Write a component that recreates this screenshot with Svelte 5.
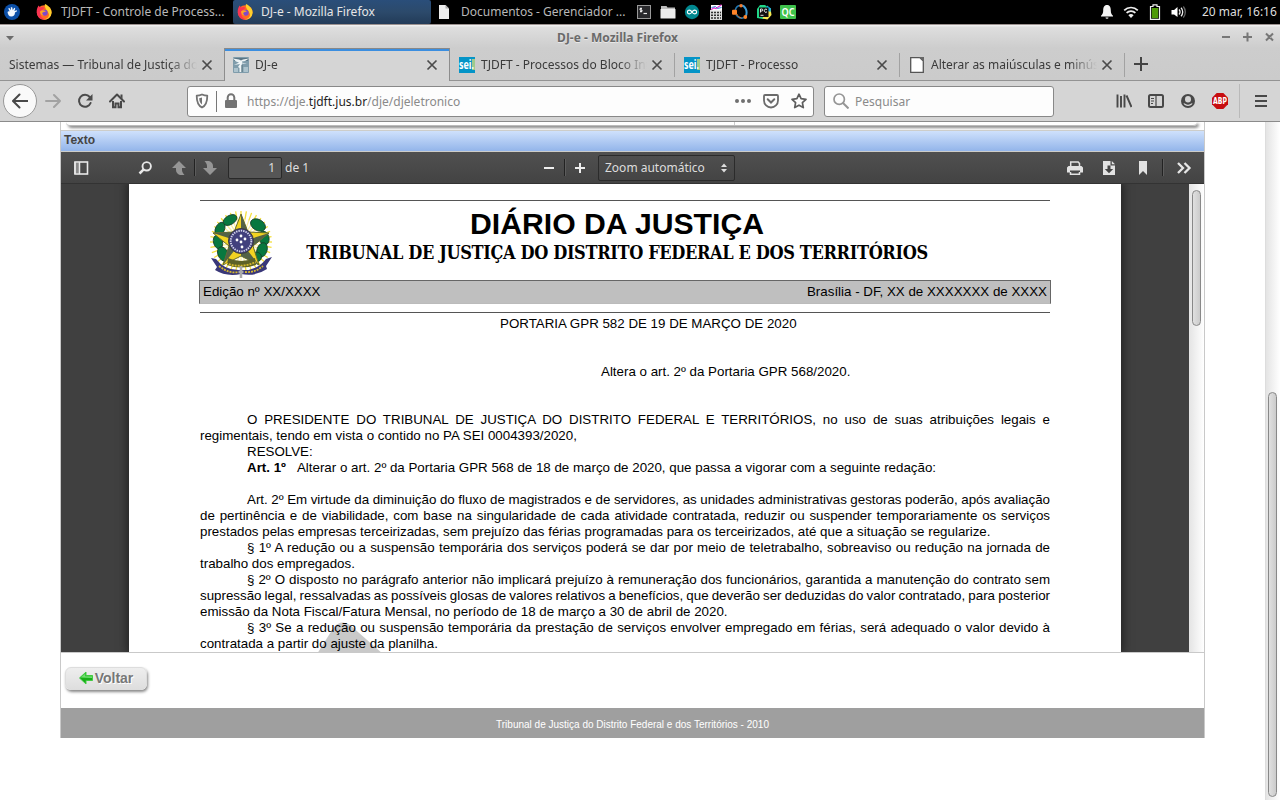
<script>
  const launchers = ['term', 'folder', 'arduino', 'calc', 'octave', 'pycharm', 'qc'];
  const tabs = [
    { title: 'Sistemas — Tribunal de Justiça do Distrito', icon: null },
    { title: 'DJ-e', icon: 'dje', active: true },
    { title: 'TJDFT - Processos do Bloco Interno', icon: 'sei' },
    { title: 'TJDFT - Processo', icon: 'sei' },
    { title: 'Alterar as maiúsculas e minúsculas', icon: 'page' }
  ];
  const lines = [
    { t: 'O PRESIDENTE DO TRIBUNAL DE JUSTIÇA DO DISTRITO FEDERAL E TERRITÓRIOS, no uso de suas atribuições legais e', i: 1, j: 1 },
    { t: 'regimentais, tendo em vista o contido no PA SEI 0004393/2020,' },
    { t: 'RESOLVE:', i: 1 },
    { b: 'Art. 1º', t: 'Alterar o art. 2º da Portaria GPR 568 de 18 de março de 2020, que passa a vigorar com a seguinte redação:', i: 1 },
    { t: '' },
    { t: 'Art. 2º Em virtude da diminuição do fluxo de magistrados e de servidores, as unidades administrativas gestoras poderão, após avaliação', i: 1, j: 1 },
    { t: 'de pertinência e de viabilidade, com base na singularidade de cada atividade contratada, reduzir ou suspender temporariamente os serviços', j: 1 },
    { t: 'prestados pelas empresas terceirizadas, sem prejuízo das férias programadas para os terceirizados, até que a situação se regularize.' },
    { t: '§ 1º A redução ou a suspensão temporária dos serviços poderá se dar por meio de teletrabalho, sobreaviso ou redução na jornada de', i: 1, j: 1 },
    { t: 'trabalho dos empregados.' },
    { t: '§ 2º O disposto no parágrafo anterior não implicará prejuízo à remuneração dos funcionários, garantida a manutenção do contrato sem', i: 1, j: 1 },
    { t: 'supressão legal, ressalvadas as possíveis glosas de valores relativos a benefícios, que deverão ser deduzidas do valor contratado, para posterior', j: 1 },
    { t: 'emissão da Nota Fiscal/Fatura Mensal, no período de 18 de março a 30 de abril de 2020.' },
    { t: '§ 3º Se a redução ou suspensão temporária da prestação de serviços envolver empregado em férias, será adequado o valor devido à', i: 1, j: 1 },
    { t: 'contratada a partir do ajuste da planilha.' }
  ];
  const ring = Array.from({ length: 36 }, (_, k) => k * 10);
</script>

{#snippet icon(name)}
  <svg class="ic" width="16" height="16" viewBox="0 0 16 16" fill="none">
    {#if name === 'xubuntu'}
      <circle cx="8" cy="8" r="8" fill="#0b4fa8" />
      <path d="M3.500 8c.5-1 1.500-1 2.300-.6L4.200 4.500l1.200-.6L7 6.300l-.2-3h1.400l.6 3 1.400-2.600 1 .7L10.400 7l2.400-.8.3 1-2.100 1.300c0 2.500-1.400 4-3.700 4C5 12.500 3.800 10.500 3.500 8z" fill="#f4f8ff" />
    {:else if name === 'firefox'}
      <circle cx="8.200" cy="8.500" r="7.300" fill="#ff6a22" />
      <path d="M9 0c3 1.500 6.900 4.500 6.600 9A7.200 7.200 0 0 1 7 15.500c5-.5 7-3.500 5.500-6.500S8 4 9 0z" fill="#ffd02b" />
      <path d="M.8 6C1 4 2 3 2.500 1.500l1.700 2C6 2.500 7.500 3 8.500 4L6 6l-1.500 4c-.5 2 1.500 4.500 5 5.500-5 1-9.500-3-8.700-9.500z" fill="#fb3452" />
      <circle cx="8.700" cy="8.800" r="3" fill="#8049c9" /><path d="M4 7.500c2-2 4-1 6 0-2 0-2.500.8-3.300 1s-.7 2 1.300 3c-3 0-4-2-4-4z" fill="#ffa422" />
    {:else if name === 'doc'}
      <path d="M3 1h6.500L13 4.500V15H3z" fill="#eee" /><path d="M9.500 1v3.500H13z" fill="#aaa" />
    {:else if name === 'term'}
      <rect x="1.500" y="1.500" width="13" height="13" fill="#29292c" stroke="#999" /><path d="M6 4.500H4v1.500h2v1.500H4M5 3.500v5" stroke="#eee" /><path d="M7.500 9.500H11" stroke="#eee" stroke-width="1.200" />
    {:else if name === 'folder'}
      <path d="M1 2h5.500l1 1.500H15V6H1z" fill="#bbb" /><rect x=".5" y="5" width="15" height="9.500" rx=".6" fill="#ececec" />
    {:else if name === 'arduino'}
      <circle cx="8" cy="8" r="7.200" fill="#00878f" /><path d="M8 8c-1.500-2.500-4.600-2.300-4.600 0S6.500 10.500 8 8s4.600-2.300 4.600 0S9.500 10.500 8 8z" stroke="#fff" stroke-width="1.200" />
    {:else if name === 'calc'}
      <rect x="2" y="6" width="12" height="10" fill="#ddd" /><rect x="3" y="1" width="11" height="5.500" fill="#fff" /><path d="M3 5.800l3-2 2 .7 5.500-3.800" stroke="#e33ad0" stroke-width="1.300" /><path d="M3.500 3.500l4-1 2 2 4-1" stroke="#38d" />
      <path d="M3 8.500h10M3 11.200h10M3 14h10" stroke="#333" stroke-width="1.500" stroke-dasharray="2 1" />
    {:else if name === 'octave'}
      <path d="M3.300 6C4 3 6 1.500 8.500 1.500M4 10.500c1.500 3 5 4.500 8 3" stroke="#1f78b4" stroke-width="1.600" /><path d="M9 1.300c4.500.5 7 6 4.700 11" stroke="#3c9bd6" stroke-width="2" /><path d="M4.800 10c1 2 2.500 3.500 4.700 4" stroke="#e0752d" />
      <rect x="0" y="5.800" width="5" height="5" rx="1" fill="#ff8428" /><circle cx="9" cy="1.800" r="1.700" fill="#f47a2d" /><circle cx="13.300" cy="13" r="1.900" fill="#ff8428" />
    {:else if name === 'pycharm'}
      <path d="M1 5l3-4 5 0 5 4-1 8-6 2-6-1z" fill="#21d789" /><path d="M10 5l4.500-1 1 7-4 4.500-5-1z" fill="#f7e84f" /><path d="M11 1.500l4 3-.5 3.500L10 6z" fill="#12b8e6" /><rect x="3" y="3.500" width="9.500" height="9.500" fill="#111" />
      <path d="M4.500 8.500v-3.500h1.300a1 1 0 0 1 0 2H4.500M11 5.500c-1.800-1-2.700 0-2.700 1.200s1 2.200 2.700 1.200M4.500 11.300h3" stroke="#fff" stroke-width=".9" />
    {:else if name === 'qc'}
      <rect x="0" y="1" width="16" height="14" rx="1" fill="#3fc24c" /><text x="8" y="12.200" fill="#fff" font-size="11" font-weight="600" text-anchor="middle" textLength="13" lengthAdjust="spacingAndGlyphs" font-family="Noto Sans">QC</text>
    {:else if name === 'bell'}
      <path d="M8 1c-3 0-3.800 2.500-3.800 5.500 0 2.500-.7 4-2.200 5.200V12.500h12v-.8c-1.500-1.200-2.200-2.700-2.200-5.200C11.800 3.500 11 1 8 1zM6.500 13.500h3a1.500 1.200 0 0 1-3 0z" fill="#f4f4f4" />
    {:else if name === 'wifi'}
      <path d="M1.200 6.300a9.600 9.600 0 0 1 13.600 0M3.600 8.900a6.200 6.200 0 0 1 8.800 0" stroke="#eee" stroke-width="1.700" /><path d="M5.400 11.300a3.700 3.700 0 0 1 5.200 0L8 14z" fill="#eee" />
    {:else if name === 'battery'}
      <path d="M6 .8h4V2.500h2.500v12.900h-9V2.500H6z" stroke="#eee" stroke-width="1.200" /><rect x="4.800" y="4" width="6.400" height="10.200" fill="#4e9a06" />
    {:else if name === 'volume'}
      <path d="M.5 6h2.600L6.500 3v10L3.100 10.500H.5z" fill="#fff" /><path d="M8 5.500a3.500 3.500 0 0 1 0 5M10 3.800a6 6 0 0 1 0 8.400" stroke="#eee" stroke-width="1.300" /><path d="M12.300 2.500a8.500 8.500 0 0 1 0 11" stroke="#666" stroke-width="1.300" />
    {:else if name === 'dje'}
      <rect x="0" y="0" width="16" height="16" rx="1" fill="#7f9cab" /><path d="M1 1h14v3H1z" fill="#5a7686" /><path d="M0 1.500l6 1 2 1 2-1 6-1-4 2.500-3 .5v1l5 1.500-5-.5L8.500 9v6H6.500v-4L5 10l2-3-6 1 5-2.500-3-1z" fill="#eef4f6" /><path d="M1 11h4v4H1zM10.500 10H15v5h-4.500z" fill="#adc3cd" /><path d="M9 8v7" stroke="#4d6775" stroke-width=".8" />
    {:else if name === 'sei'}
      <rect width="16" height="16" fill="#0494c7" /><rect x="13" y="2" width="3" height="11" fill="#9ecb8d" /><text x="0" y="12" fill="#fff" font-size="12" font-weight="700" textLength="15" lengthAdjust="spacingAndGlyphs" font-family="Noto Sans">sei.</text>
    {:else if name === 'page'}
      <path d="M1.700.7H11L14.300 4v11.300H1.700z" fill="#fff" stroke="#555" stroke-width="1.300" /><path d="M10 0h5v5z" fill="#666" />
    {:else if name === 'x'}
      <path d="M3.500 3.500l9 9M12.500 3.500l-9 9" stroke="#4b4b4b" stroke-width="1.700" />
    {:else if name === 'plus'}
      <path d="M8 1v14M1 8h14" stroke="#444" stroke-width="2" />
    {:else if name === 'back'}
      <path d="M15.500 8H1.500M7.500 1.500L1 8l6.500 6.500" stroke="#484848" stroke-width="2" stroke-linejoin="round" stroke-linecap="round" />
    {:else if name === 'forward'}
      <path d="M1 8h14M9 2l6 6-6 6" stroke="#a2a2a2" stroke-width="2" stroke-linejoin="round" stroke-linecap="round" />
    {:else if name === 'reload'}
      <path d="M12.700 4A6 6 0 1 0 13.600 10" stroke="#4b4b4b" stroke-width="2" stroke-linecap="round" /><path d="M15.500 1v6.500H9z" fill="#4b4b4b" />
    {:else if name === 'home'}
      <path d="M1 8.500L8 1.500l7 7" stroke="#484848" stroke-width="2" stroke-linejoin="round" stroke-linecap="round" /><path d="M4 8v6.200h2.500v-3.700h3v3.700H12V8" stroke="#484848" stroke-width="2" /><path d="M11.500 1.500h2V6l-2-2z" fill="#484848" />
    {:else if name === 'shield'}
      <path d="M8 1.500c2 .9 4 1.200 5.300 1.200 0 5-.8 9.600-5.300 11.800C3.500 12.300 2.700 7.700 2.700 2.700 4 2.700 6 2.400 8 1.500z" stroke="#737373" stroke-width="1.800" stroke-linejoin="round" /><path d="M8 4.500v7C6 10 5.300 8 5.200 5.200z" fill="#737373" />
    {:else if name === 'lock'}
      <path d="M4.700 7V4.500a3.300 3.300 0 0 1 6.600 0V7" stroke="#737373" stroke-width="2" /><rect x="2" y="7" width="12" height="8" rx="1" fill="#737373" />
    {:else if name === 'dots'}
      <circle cx="2" cy="8" r="2" fill="#707070" /><circle cx="8" cy="8" r="2" fill="#707070" /><circle cx="14" cy="8" r="2" fill="#707070" />
    {:else if name === 'pocket'}
      <path d="M2 2h12a1 1 0 0 1 1 1v4.500a7 7 0 0 1-14 0V3a1 1 0 0 1 1-1z" stroke="#6b6b6b" stroke-width="1.800" /><path d="M4.700 6.300L8 9.500l3.300-3.200" stroke="#6b6b6b" stroke-width="2" stroke-linecap="round" />
    {:else if name === 'star'}
      <path d="M8 1.200l2.100 4.500 4.900.6-3.600 3.400.9 4.900L8 12.200l-4.300 2.400.9-4.900L1 6.300l4.900-.6z" stroke="#5e5e5e" stroke-width="1.700" stroke-linejoin="round" />
    {:else if name === 'glass'}
      <circle cx="6.200" cy="6.200" r="5.200" stroke="#959595" stroke-width="1.700" /><path d="M10 10l5.500 5.500" stroke="#959595" stroke-width="2" />
    {:else if name === 'library'}
      <path d="M1.500 1.500v13M5 3v11.500M8.500 1.500v13M10.500 2.500l5 11.500" stroke="#484848" stroke-width="1.900" />
    {:else if name === 'sidebar'}
      <rect x="1" y="2" width="14" height="12" rx="1.500" stroke="#484848" stroke-width="2" /><path d="M8 2v12M3 5.500h3M3 8h3M3 10.500h2" stroke="#484848" stroke-width="1.200" />
    {:else if name === 'account'}
      <circle cx="8" cy="8" r="7" fill="#484848" /><ellipse cx="8" cy="6.300" rx="3" ry="3.300" fill="#d5d5d5" /><path d="M3.500 10.300c1 0 1.500.2 2.200.7 1.400.9 3.200.9 4.600 0 .7-.5 1.200-.7 2.200-.7-1 3.600-8 3.600-9 0z" fill="#d5d5d5" />
    {:else if name === 'abp'}
      <path d="M4.700 0h6.600L16 4.700v6.600L11.300 16H4.700L0 11.300V4.700z" fill="#c70d10" /><text x="8" y="11" fill="#fff" font-size="8" font-weight="900" text-anchor="middle" textLength="14" lengthAdjust="spacingAndGlyphs" font-family="DejaVu Sans">ABP</text>
    {:else if name === 'menu'}
      <path d="M2 3h12M2 8h12M2 13h12" stroke="#484848" stroke-width="2" />
    {:else if name === 'toggle'}
      <rect x="2" y="2" width="12.500" height="12" stroke="#e8e8e8" stroke-width="1.600" /><path d="M3 3h3v10H3z" fill="#8a8a8a" /><path d="M6.500 2v12M2 2v12" stroke="#e8e8e8" stroke-width="1.500" />
    {:else if name === 'find'}
      <circle cx="9.700" cy="6.300" r="4.200" stroke="#e8e8e8" stroke-width="1.900" /><path d="M6.700 9.300L2.500 13.500" stroke="#e8e8e8" stroke-width="2.500" />
    {:else if name === 'up'}
      <path d="M8 1l7 7h-4v2c0 2 1 3 2.500 5H9c-2.500-1-4-2.500-4-5V8H1z" fill="#959595" />
    {:else if name === 'down'}
      <path d="M2.500 1H7c2.500 1 4 2.500 4 5v2h4l-7 7-7-7h4V6c0-2-1-3-2.500-5z" fill="#959595" />
    {:else if name === 'minus'}
      <path d="M3 8h10" stroke="#eee" stroke-width="2" />
    {:else if name === 'zplus'}
      <path d="M3 8h10M8 3v10" stroke="#eee" stroke-width="2" />
    {:else if name === 'print'}
      <path d="M3.700 7V2h7.500l1.300 1.500V7" stroke="#e2e2e2" stroke-width="1.500" /><path d="M0 7.500L1.500 6h13L16 7.500V12.500h-3V10.500H3v2H0z" fill="#e2e2e2" /><path d="M3.500 12v2.200h9V12" stroke="#e2e2e2" stroke-width="1.500" />
    {:else if name === 'download'}
      <path d="M2 1h7.500v4.500H14V15H2zM10.800 1L14 4.300h-3.200z" fill="#e2e2e2" /><path d="M6.500 5.500h3V9h2.700L8 13.200 3.800 9h2.700z" fill="#444" />
    {:else if name === 'bookmark'}
      <path d="M4 1h8v14l-4-4-4 4z" fill="#e2e2e2" />
    {:else if name === 'more'}
      <path d="M2 3l5 5-5 5M8.500 3l5 5-5 5" stroke="#e6e6e6" stroke-width="2.300" />
    {:else if name === 'green'}
      <path d="M1.500 8L8 2v3.500h6.500v5H8V14z" fill="#19ad19" stroke="#42cb42" /><path d="M2.800 7.500L7.300 3.500v2.700H14V8z" fill="#6fe06f" />
    {/if}
  </svg>
{/snippet}

<div class="screen">
  <header class="panel">
    <span class="s" style:width="24px">{@render icon('xubuntu')}</span>
    <div class="task t1">{@render icon('firefox')}<span>TJDFT - Controle de Process...</span></div>
    <div class="task on">{@render icon('firefox')}<span>DJ-e - Mozilla Firefox</span></div>
    <div class="task t3">{@render icon('doc')}<span>Documentos - Gerenciador ...</span></div>
    {#each launchers as l}<span class="s" style:width="24px">{@render icon(l)}</span>{/each}
    <div class="tray">
      {#each ['bell', 'wifi', 'battery', 'volume'] as n}<span class="s" style:width="24px">{@render icon(n)}</span>{/each}
      <span class="clock">20 mar, 16:16</span>
    </div>
  </header>

  <div class="title">
    <svg width="10" height="6" viewBox="0 0 10 6"><path d="M1 1h8L5 5.500z" fill="#6c6c6c" /></svg>
    <b>DJ-e - Mozilla Firefox</b>
    <svg width="56" height="12" viewBox="0 0 56 12" stroke="#777" stroke-width="2"><path d="M2 5h8M23 5h9M27.500.5v9M46 1.500l7 7M53 1.500l-7 7" /></svg>
  </div>

  <div class="tabs">
    {#each tabs as tab}
      <div class="tab" class:active={tab.active}>
        {#if tab.icon}{@render icon(tab.icon)}{/if}
        <span class="label">{tab.title}</span>
        {@render icon('x')}
      </div>
    {/each}
    <span class="new">{@render icon('plus')}</span>
  </div>

  <nav class="nav">
    <span class="back">{@render icon('back')}</span>
    <span class="s" style:width="32px">{@render icon('forward')}</span>
    <span class="s" style:width="32px">{@render icon('reload')}</span>
    <span class="s" style:width="32px">{@render icon('home')}</span>
    <div class="field url">
      {@render icon('shield')}<i></i>{@render icon('lock')}
      <span class="addr">https://dje.<em>tjdft.jus.br</em>/dje/djeletronico</span>
      {@render icon('dots')}{@render icon('pocket')}{@render icon('star')}
    </div>
    <div class="field search">{@render icon('glass')}<span>Pesquisar</span></div>
    <div class="tools">
      {#each ['library', 'sidebar', 'account', 'abp'] as n}<span class="s" style:width="32px">{@render icon(n)}</span>{/each}
      <i></i><span class="s" style:width="38px">{@render icon('menu')}</span>
    </div>
  </nav>

  <main class="view">
    <section class="site">
      <div class="prev"><div class="card"><span></span></div></div>
      <div class="caption">Texto</div>
      <div class="pdf">
        <div class="bar">
          <span class="s g1">{@render icon('toggle')}</span>
          <span class="s g2">{@render icon('find')}</span>
          <span class="s g3">{@render icon('up')}</span><i></i>
          <span class="s g4">{@render icon('down')}</span>
          <span class="num">1</span><span class="of">de 1</span>
          <span class="s g5">{@render icon('minus')}</span><i></i>
          <span class="s g6">{@render icon('zplus')}</span>
          <span class="zoom">Zoom automático <svg width="8" height="10" viewBox="0 0 8 10"><path d="M1 4l3-3.500L7 4zM1 6l3 3.500L7 6z" fill="#ddd" /></svg></span>
          <div class="right">
            {#each ['print', 'download', 'bookmark'] as n}<span class="s" style:width="34px">{@render icon(n)}</span>{/each}
            <i></i><span class="s" style:width="41px">{@render icon('more')}</span>
          </div>
        </div>
        <div class="stage">
          <div class="page">
            <svg class="mark" width="66" height="32" viewBox="0 0 66 32"><path d="M0 32L17 5Q24-3 33 3L66 32z" fill="#c9c9c9" /></svg>
            <div class="rule"></div>
            <div class="head">
              <svg class="crest" width="66" height="70" viewBox="0 0 66 70">
                <g stroke="#f5df3c" stroke-width="1.300">{#each ring as a}<path d="M32 32L32 1" transform="rotate({a} 32 32)" />{/each}</g>
                <circle cx="32" cy="33" r="24" fill="#fff" opacity=".5" />
                <g fill="#08783f" stroke="#173b27" stroke-width=".8">
                  <ellipse cx="21" cy="10" rx="7.500" ry="4.500" transform="rotate(-30 21 10)" /><ellipse cx="11" cy="19" rx="4.500" ry="7" transform="rotate(25 11 19)" />
                  <ellipse cx="9" cy="32" rx="4.500" ry="7" transform="rotate(-15 9 32)" /><ellipse cx="14" cy="44" rx="5" ry="7.500" transform="rotate(-25 14 44)" />
                  <ellipse cx="49" cy="15" rx="8" ry="5.500" transform="rotate(30 49 15)" /><ellipse cx="55" cy="28" rx="5" ry="7" transform="rotate(-15 55 28)" />
                  <ellipse cx="53" cy="40" rx="5" ry="7.500" transform="rotate(20 53 40)" /><ellipse cx="47" cy="47" rx="5.500" ry="5" />
                </g>
                <path d="M32 4l7 18 21 1-16 13 6 19-18-9-18 9 6-19L4 23l21-1z" fill="#f2d321" stroke="#686c28" />
                <path d="M32 4v28l7-10zM60 23L32 32l12 4zM50 55L32 32v14zM14 55l18-23-12 4zM4 23l28 9-7-10z" fill="#536246" />
                <circle cx="32" cy="31" r="12.500" fill="#41407d" stroke="#3b3b3b" /><circle cx="32" cy="31" r="10.300" stroke="#d7d7ec" stroke-width="1.800" stroke-dasharray="1.400 1" fill="none" />
                <g fill="#fff"><circle cx="32" cy="26" r="1.400" /><circle cx="28" cy="30" r="1.400" /><circle cx="36" cy="29" r="1.400" /><circle cx="32" cy="32" r="1.400" /><circle cx="33" cy="37" r="1.400" /></g>
                <path d="M19 48q13 6 27 0l1 7q-15 5-29 0z" fill="#5c6128" />
                <path d="M2 48l5 1q9 12 25 11 16 1 25-11l6-2-6 9 1 3Q46 67 32 64 17 67 6 60l2-3z" fill="#393779" />
                <path d="M10 56q10 8 19 6M36 62q10 1 18-6M17 53q14 6 30-1" stroke="#d5b92d" stroke-width="1.800" stroke-dasharray="2 1" fill="none" />
                <path d="M32 56v12M29.500 62h5" stroke="#aaa" stroke-width="2.500" />
              </svg>
              <h1>DIÁRIO DA JUSTIÇA</h1>
              <h2>TRIBUNAL DE JUSTIÇA DO DISTRITO FEDERAL E DOS TERRITÓRIOS</h2>
            </div>
            <div class="edition"><span>Edição nº XX/XXXX</span><span>Brasília - DF, XX de XXXXXXX de XXXX</span></div>
            <div class="rule"></div>
            <article>
              <p class="ord">PORTARIA GPR 582 DE 19 DE MARÇO DE 2020</p>
              <p class="sum">Altera o art. 2º da Portaria GPR 568/2020.</p>
              {#each lines as l}
                <p class:indent={l.i} class:just={l.j}>{#if l.b}<b>{l.b}</b>{/if}{l.t}</p>
              {/each}
            </article>
          </div>
          <div class="inner-scroll"><div></div></div>
        </div>
      </div>
      <div class="actions"><button>{@render icon('green')}Voltar</button></div>
      <footer>Tribunal de Justiça do Distrito Federal e dos Territórios - 2010</footer>
    </section>
    <div class="scroll"><div></div></div>
  </main>
</div>

<style>
  :global(body) { margin: 0; overflow: hidden; }
  * { box-sizing: border-box; }
  .screen { width: 1280px; height: 800px; overflow: hidden; background: #fff; font: 12px/16px "Noto Sans", sans-serif; display: flex; flex-direction: column; white-space: nowrap; }
  .ic, svg { display: block; flex: none; }
  .s { display: flex; justify-content: center; align-items: center; flex: none; }
  .panel { height: 24px; background: #000; color: #b8b8b8; display: flex; align-items: center; flex: none; }
  .task { display: flex; align-items: center; height: 24px; flex: none; }
  .t1 { width: 209px; padding-left: 12px; gap: 9px; }
  .on { width: 198px; padding-left: 4px; gap: 8px; color: #e6e6e6; background: linear-gradient(#2a4e7a, #2c4a6b 50%, #223b58); border-radius: 2px; }
  .t3 { width: 201px; padding-left: 5px; gap: 9px; }
  .tray { margin-left: auto; display: flex; align-items: center; color: #ddd; }
  .clock { width: 89px; padding-left: 11px; }
  .title { height: 24px; flex: none; display: flex; align-items: center; justify-content: space-between; padding: 2px 4px 0 5px; border-top: 1px solid #9b918f; background: linear-gradient(#f4f4f4, #dedede 10%, #cdcdcd); color: #6a6a6a; }
  .title b { margin-left: 0; font-weight: 700; text-shadow: 0 1px #e8e8e8; }
  .tabs { height: 33px; flex: none; display: flex; background: linear-gradient(#cdcdcd, #cbcbcb); border-bottom: 1px solid #939393; color: #3b3b3b; }
  .tab { width: 225px; height: 33px; display: flex; align-items: center; padding: 0 10px 0 9px; gap: 6px; position: relative; }
  .tab + .tab::before { content: ""; position: absolute; left: -1px; top: 5px; width: 1px; height: 24px; background: #a2a2a2; }
  .tab:first-child { width: 224px; padding-right: 9px; }
  .tab.active { width: 226px; background: #d5d5d5; border: 1px solid #8d8d8d; border-top-color: #888; border-bottom: 0; box-shadow: inset 0 2px #3b8ee0; padding: 0 9px 0 8px; }
  .tab.active::before, .tab.active + .tab::before { display: none; }
  .label { flex: 1; overflow: hidden; mask-image: linear-gradient(to right, #000 calc(100% - 28px), transparent); }
  .tab .ic:last-child { margin-left: -4px; }
  .new { border-left: 1px solid #a2a2a2; height: 24px; margin: 5px 0 0 -1px; padding: 3px 0 0 8px; }
  .nav { height: 41px; flex: none; display: flex; align-items: center; background: #d5d5d5; border-bottom: 1px solid #8b8b8b; }
  .back { width: 34px; height: 34px; margin-left: 3px; border: 1px solid #989898; border-radius: 50%; background: #f9f9f9; display: grid; place-items: center; }
  .field { height: 31px; border: 1px solid #888; border-radius: 3px; background: #fdfdfd; display: flex; align-items: center; color: #8a8a8a; }
  .field span { padding-top: 1px; }
  .url { width: 627px; margin-left: 54px; padding: 0 6px; }
  .url i { width: 1px; height: 21px; background: #777; margin: 0 6px 0 6px; }
  .addr { flex: 1; margin-left: 8px; }
  .addr em { font-style: normal; color: #1d1d1d; }
  .url .ic + .ic { margin-left: 12px; }
  .search { width: 230px; margin-left: 10px; padding-left: 8px; gap: 6px; }
  .tools { margin-left: auto; display: flex; align-items: center; }
  .tools i { width: 1px; height: 34px; background: #b9b9b9; margin: 0 2px 0 3px; }
  .view { flex: 1; display: flex; min-height: 0; }
  .site { margin-left: 60px; width: 1145px; height: 616px; border: 1px solid #c9c9c9; border-top: 0; border-bottom: 0; }
  .prev { height: 8px; padding: 0 7px 4px 5px; }
  .card { height: 4px; border-bottom: 1px solid #bbb; border-radius: 0 0 6px 6px; box-shadow: 2px 2px 3px #888; }
  .card span { display: block; margin-left: 668px; width: 1px; height: 3px; background: #ccc; }
  .caption { height: 22px; border: solid #cdcdc9; border-width: 1px 0; background: linear-gradient(#cfe1fc, #93b5ea); color: #444; font: bold 12px/18px "Liberation Sans", sans-serif; padding-left: 3px; }
  .pdf { height: 501px; border-bottom: 1px solid #c9c9c9; }
  .bar { height: 32px; display: flex; align-items: center; background: linear-gradient(#505050, #434343); color: #ddd; border-bottom: 1px solid #333; }
  .bar i { width: 1px; height: 17px; background: #222; box-shadow: 1px 0 #5c5c5c; }
  .g1 { margin-left: 12px; } .g2 { margin-left: 48px; } .g3 { margin-left: 18px; }
  .bar .g3 + i { margin-left: 7px; } .g4 { margin-left: 7px; }
  .num { margin-left: 10px; width: 54px; height: 22px; border: 1px solid #292929; border-radius: 2px; background: #565656; text-align: right; padding: 2px 6px; }
  .of { margin-left: 3px; width: 24px; }
  .g5 { margin-left: 232px; } .g5 + i { margin-left: 7px; } .g6 { margin-left: 7px; }
  .zoom { width: 137px; height: 26px; margin-left: 10px; border: 1px solid #2b2b2b; border-radius: 2px; display: flex; align-items: center; justify-content: space-between; padding: 1px 6px 0; }
  .right { margin-left: auto; display: flex; align-items: center; }
  .right i { margin-left: 2px; }
  .stage { height: 468px; display: flex; justify-content: space-between; overflow: hidden; background: #404040; padding-left: 68px; }
  .page { width: 992px; background: #fff; padding: 16px 71px 0; box-shadow: 0 0 9px 2px #222; color: #000; position: relative; font: 13.330px/16px "Liberation Sans", sans-serif; }
  .mark { position: absolute; left: 188px; top: 438px; }
  .rule { height: 1px; background: #555; }
  .head { height: 79px; position: relative; padding: 4px 16px 0 0; text-align: center; }
  .crest { position: absolute; left: 9px; top: 9px; }
  h1 { margin: 0; font: bold 30.200px/38px "Liberation Sans", sans-serif; }
  h2 { margin: 0 -20px; font: bold 18px/20px "DejaVu Serif Condensed", "DejaVu Serif", serif; font-stretch: condensed; letter-spacing: -.36px; }
  .edition { height: 24px; margin: 0 -1px 8px; border: 1px solid #666; border-bottom-color: #bbb; background: #bfbfbf; display: flex; justify-content: space-between; padding: 3px 3px; }
  article { position: relative; padding-top: 3px; }
  p { margin: 0; height: 16px; }
  .ord { padding-left: 300px; margin-bottom: 32px; }
  .sum { padding-left: 401px; margin-bottom: 32px; }
  .indent { padding-left: 47px; }
  .just { text-align-last: justify; white-space: normal; word-spacing: -.7px; }
  p b { margin-right: 11px; }
  .inner-scroll { width: 15px; background: linear-gradient(90deg, #e4e4e4, #fff); padding: 6px 3px; position: relative; }
  .inner-scroll div, .scroll div { width: 9px; border: 1px solid #888; border-radius: 5px; background: linear-gradient(90deg, #e0e0e0, #cbcbcb); }
  .inner-scroll div { height: 136px; }
  .actions { height: 55px; padding: 14px 4px; }
  button { width: 82px; height: 23px; display: flex; align-items: center; justify-content: center; border: 1px solid #ddd; border-radius: 6px; background: linear-gradient(#eee, #dedede); box-shadow: 1px 2px 3px #888; color: #777; font: bold 14px/20px "Liberation Sans", sans-serif; padding: 0 1px 2px 0; gap: 1px; text-shadow: 1px 1px #fff; }
  footer { height: 30px; background: #9f9f9f; color: #fff; text-align: center; font: 10px/33px "Liberation Sans", sans-serif; }
  .scroll { margin-left: 60px; width: 15px; background: linear-gradient(90deg, #e4e4e4, #fff); border-left: 1px solid #ddd; padding: 270px 2px 0; }
  .scroll div { height: 405px; }
</style>
